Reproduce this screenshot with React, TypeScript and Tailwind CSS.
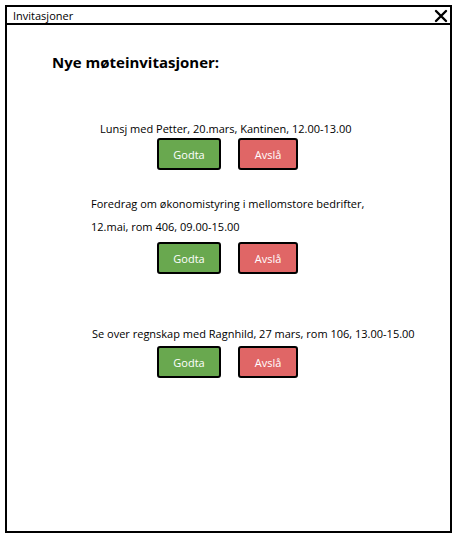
import React from "react";

function Buttons() {
  return (
    <div className="flex gap-[17px] ml-[150px]">
      <button className="w-[64px] h-[32px] rounded-[3px] border-[2.5px] border-black bg-[#69a84f] text-white text-[11px] leading-none">
        Godta
      </button>
      <button className="w-[60px] h-[32px] rounded-[3px] border-[2.5px] border-black bg-[#e06666] text-white text-[11px] leading-none">
        Avslå
      </button>
    </div>
  );
}

export default function App() {
  return (
    <div
      className="w-[458px] h-[539px] bg-white pt-[5px] pl-[5px]"
      style={{ fontFamily: '"Open Sans", "Liberation Sans", sans-serif' }}
    >
      <div className="w-[447px] h-[528px] border-2 border-black flex flex-col">
        {/* Title bar */}
        <div className="h-[18px] border-b-2 border-black flex items-center justify-between pl-[6px] pr-[2px]">
          <span className="text-[11px] text-black leading-none">Invitasjoner</span>
          <svg width="14" height="14" viewBox="0 0 14 14" className="mt-[1px]">
            <path d="M2 2 L12 12 M12 2 L2 12" stroke="black" strokeWidth="2.4" strokeLinecap="round" />
          </svg>
        </div>

        {/* Content */}
        <div className="flex flex-col text-black">
          <h1 className="ml-[45px] mt-[30px] text-[15px] font-bold leading-none">Nye møteinvitasjoner:</h1>

          <p className="ml-[93px] mt-[53px] text-[11px] leading-none">
            Lunsj med Petter, 20.mars, Kantinen, 12.00-13.00
          </p>
          <div className="mt-[4px]">
            <Buttons />
          </div>

          <p className="ml-[84px] mt-[28px] text-[11px] leading-none">
            Foredrag om økonomistyring i mellomstore bedrifter,
          </p>
          <p className="ml-[84px] mt-[12px] text-[11px] leading-none">12.mai, rom 406, 09.00-15.00</p>
          <div className="mt-[10px]">
            <Buttons />
          </div>

          <p className="ml-[85px] mt-[54px] text-[11px] leading-none">
            Se over regnskap med Ragnhild, 27 mars, rom 106, 13.00-15.00
          </p>
          <div className="mt-[7px]">
            <Buttons />
          </div>
        </div>
      </div>
    </div>
  );
}
